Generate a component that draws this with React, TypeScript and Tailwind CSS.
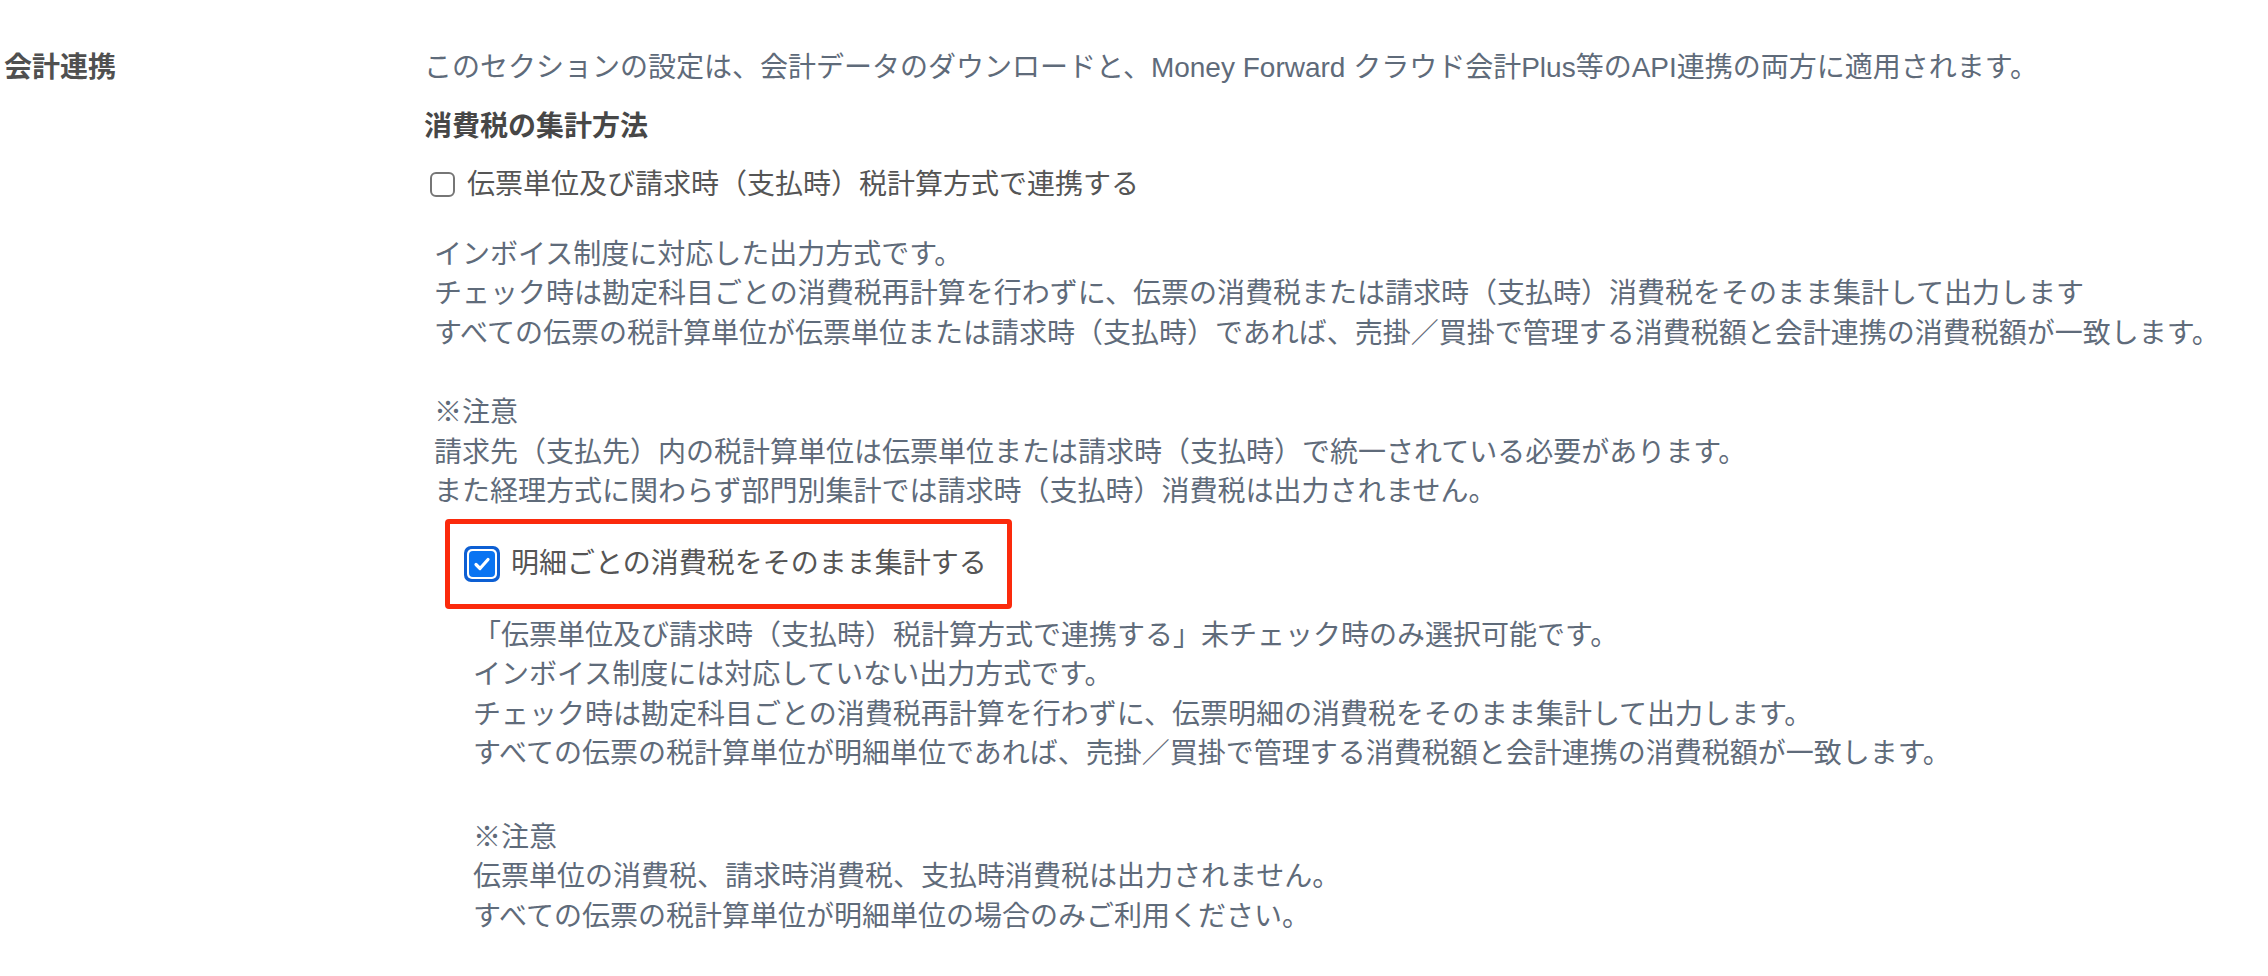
import React from 'react';

const invoiceLines = [
  'インボイス制度に対応した出力方式です。',
  'チェック時は勘定科目ごとの消費税再計算を行わずに、伝票の消費税または請求時（支払時）消費税をそのまま集計して出力します',
  'すべての伝票の税計算単位が伝票単位または請求時（支払時）であれば、売掛／買掛で管理する消費税額と会計連携の消費税額が一致します。',
];

const invoiceNotes = [
  '請求先（支払先）内の税計算単位は伝票単位または請求時（支払時）で統一されている必要があります。',
  'また経理方式に関わらず部門別集計では請求時（支払時）消費税は出力されません。',
];

const detailLines = [
  '「伝票単位及び請求時（支払時）税計算方式で連携する」未チェック時のみ選択可能です。',
  'インボイス制度には対応していない出力方式です。',
  'チェック時は勘定科目ごとの消費税再計算を行わずに、伝票明細の消費税をそのまま集計して出力します。',
  'すべての伝票の税計算単位が明細単位であれば、売掛／買掛で管理する消費税額と会計連携の消費税額が一致します。',
];

const detailNotes = [
  '伝票単位の消費税、請求時消費税、支払時消費税は出力されません。',
  'すべての伝票の税計算単位が明細単位の場合のみご利用ください。',
];

function CheckedBox() {
  return (
    <span className="flex h-[36px] w-[36px] shrink-0 rounded-[7px] bg-[#0d5fd3] p-[3px]">
      <span className="flex flex-1 rounded-[5px] bg-white p-[2px]">
        <span className="flex flex-1 items-center justify-center rounded-[4px] bg-[#0a74f2]">
          <svg viewBox="0 0 20 20" className="h-[20px] w-[20px]">
            <path d="M4 10.5l4 4 8-9" fill="none" stroke="white" strokeWidth="3.2" strokeLinecap="round" strokeLinejoin="round" />
          </svg>
        </span>
      </span>
    </span>
  );
}

function App() {
  return (
    <div className="min-h-screen bg-white font-['Liberation_Sans','Noto_Sans_CJK_JP',sans-serif] text-[28px] leading-[39.5px]">
      <div className="flex pt-[48px]">
        <div className="w-[424px] shrink-0 pl-[4px] font-bold text-[#505050]">会計連携</div>

        <div className="flex-1">
          <p className="text-[#5f6b7a]">
            このセクションの設定は、会計データのダウンロードと、Money Forward クラウド会計Plus等のAPI連携の両方に適用されます。
          </p>

          <h3 className="mt-[19px] font-bold text-[#474747]">消費税の集計方法</h3>

          <label className="mt-[19px] flex items-center gap-[12px] pl-[6px] text-[#555555]">
            <span className="h-[25px] w-[25px] shrink-0 rounded-[6px] border-2 border-[#767676] bg-white" />
            伝票単位及び請求時（支払時）税計算方式で連携する
          </label>

          <div className="mt-[30px] pl-[10px] text-[#5f6b7a]">
            {invoiceLines.map((line) => (
              <p key={line}>{line}</p>
            ))}
            <p className="mt-[40px]">※注意</p>
            {invoiceNotes.map((line) => (
              <p key={line}>{line}</p>
            ))}
          </div>

          {/* highlighted option */}
          <div className="mt-[7px] ml-[21px] flex h-[90px] w-[567px] items-center gap-[11px] rounded-[4px] border-[5px] border-[#fb2a0c] pl-[14px] text-[#555555]">
            <CheckedBox />
            明細ごとの消費税をそのまま集計する
          </div>

          <div className="mt-[7px] pl-[49px] pb-[60px] text-[#5f6b7a]">
            {detailLines.map((line) => (
              <p key={line}>{line}</p>
            ))}
            <p className="mt-[44px]">※注意</p>
            {detailNotes.map((line) => (
              <p key={line}>{line}</p>
            ))}
          </div>
        </div>
      </div>
    </div>
  );
}

export default App;
